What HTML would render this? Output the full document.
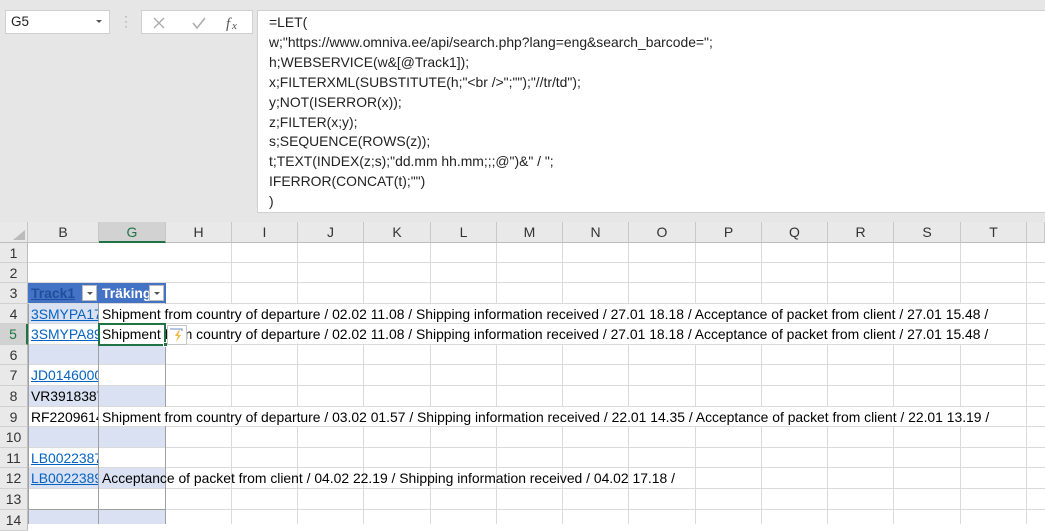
<!DOCTYPE html>
<html><head><meta charset="utf-8"><style>
*{margin:0;padding:0;box-sizing:border-box}
body{width:1045px;height:524px;overflow:hidden;background:#fff;font-family:"Liberation Sans",sans-serif;position:relative}
.a{position:absolute}
.fb{left:0;top:0;width:1045px;height:222px;background:#e6e6e6}
.ft{font-size:13.9px;color:#222;line-height:19.9px;white-space:pre}
.ch{top:222px;height:21px;background:#e9e9e9;border-right:1px solid #c8c8c8;border-bottom:1px solid #bdbdbd;font-size:14px;color:#333;text-align:center;line-height:20px}
.rh{left:0;width:28px;background:#e9e9e9;border-bottom:1px solid #d0d0d0;border-right:1px solid #bdbdbd;font-size:14px;color:#333;text-align:center;line-height:21px}
.hl{height:1px;background:#dadada;left:28px;width:1017px}
.vl{width:1px;background:#dadada;top:243px;height:281px}
.c{font-size:13.9px;line-height:21px;white-space:nowrap;overflow:hidden;padding-left:3px}
.lk{color:#0563c1;text-decoration:underline}
</style></head><body>
<div class="a fb"></div>
<div class="a" style="left:5px;top:10px;width:105px;height:24px;background:#fff;border:1px solid #d0d0d0;font-size:13.5px;line-height:22px;padding-left:5px;color:#222">G5</div>
<div class="a" style="left:96px;top:20px;width:0;height:0;border-left:3px solid transparent;border-right:3px solid transparent;border-top:3px solid #555"></div>
<div class="a" style="left:124px;top:14px;color:#999;font-size:12px;line-height:5px">·<br>·<br>·</div>
<div class="a" style="left:141px;top:10px;width:112px;height:24px;background:#fff;border:1px solid #d0d0d0"></div>
<svg class="a" style="left:150px;top:15px" width="100" height="16"><path d="M4 3l10 10M14 3L4 13" stroke="#aaa" stroke-width="1.3"/><path d="M43 8l4 5 8-10" stroke="#aaa" stroke-width="1.5" fill="none"/><text x="76" y="13" font-family="Liberation Serif" font-style="italic" font-size="15" fill="#555">f</text><text x="82" y="14" font-family="Liberation Serif" font-style="italic" font-size="11" fill="#555">x</text></svg>
<div class="a" style="left:257px;top:10px;width:788px;height:203px;background:#fff;border:1px solid #d0d0d0;border-right:none"></div>
<div class="a ft" style="left:269px;top:13px">=LET(
w;"https://www.omniva.ee/api/search.php?lang=eng&amp;search_barcode=";
h;WEBSERVICE(w&amp;[@Track1]);
x;FILTERXML(SUBSTITUTE(h;"&lt;br /&gt;";"");"//tr/td");
y;NOT(ISERROR(x));
z;FILTER(x;y);
s;SEQUENCE(ROWS(z));
t;TEXT(INDEX(z;s);"dd.mm hh.mm;;;@")&amp;" / ";
IFERROR(CONCAT(t);"")
)</div>
<div class="a ch" style="left:0;width:28px"></div>
<svg class="a" style="left:12px;top:229px" width="14" height="12"><path d="M13 1V11H1Z" fill="#bbb"/></svg>
<div class="a ch" style="left:28px;width:71px">B</div>
<div class="a ch" style="left:99px;width:67px;background:#d2d2d2;border-bottom:2px solid #217346;color:#217346">G</div>
<div class="a ch" style="left:166px;width:66px">H</div>
<div class="a ch" style="left:232px;width:66px">I</div>
<div class="a ch" style="left:298px;width:66px">J</div>
<div class="a ch" style="left:364px;width:67px">K</div>
<div class="a ch" style="left:431px;width:66px">L</div>
<div class="a ch" style="left:497px;width:66px">M</div>
<div class="a ch" style="left:563px;width:66px">N</div>
<div class="a ch" style="left:629px;width:67px">O</div>
<div class="a ch" style="left:696px;width:66px">P</div>
<div class="a ch" style="left:762px;width:66px">Q</div>
<div class="a ch" style="left:828px;width:66px">R</div>
<div class="a ch" style="left:894px;width:67px">S</div>
<div class="a ch" style="left:961px;width:66px">T</div>
<div class="a ch" style="left:1027px;width:18px"></div>
<div class="a vl" style="left:231px"></div><div class="a vl" style="left:297px"></div><div class="a vl" style="left:363px"></div><div class="a vl" style="left:430px"></div><div class="a vl" style="left:496px"></div><div class="a vl" style="left:562px"></div><div class="a vl" style="left:628px"></div><div class="a vl" style="left:695px"></div><div class="a vl" style="left:761px"></div><div class="a vl" style="left:827px"></div><div class="a vl" style="left:893px"></div><div class="a vl" style="left:960px"></div><div class="a vl" style="left:1026px"></div>
<div class="a hl" style="top:262px"></div><div class="a hl" style="top:282px"></div><div class="a hl" style="top:303px"></div><div class="a hl" style="top:323px"></div><div class="a hl" style="top:344px"></div><div class="a hl" style="top:364px"></div><div class="a hl" style="top:385px"></div><div class="a hl" style="top:406px"></div><div class="a hl" style="top:426px"></div><div class="a hl" style="top:447px"></div><div class="a hl" style="top:467px"></div><div class="a hl" style="top:488px"></div><div class="a hl" style="top:509px"></div>
<div class="a" style="left:28px;top:304px;width:138px;height:19px;background:#d9e1f2"></div>
<div class="a" style="left:28px;top:345px;width:138px;height:19px;background:#d9e1f2"></div>
<div class="a" style="left:28px;top:386px;width:138px;height:20px;background:#d9e1f2"></div>
<div class="a" style="left:28px;top:427px;width:138px;height:20px;background:#d9e1f2"></div>
<div class="a" style="left:28px;top:468px;width:138px;height:20px;background:#d9e1f2"></div>
<div class="a" style="left:28px;top:510px;width:138px;height:14px;background:#d9e1f2"></div>
<div class="a" style="left:28px;top:304px;width:1px;height:220px;background:#a0a0a0"></div>
<div class="a" style="left:98px;top:283px;width:1px;height:241px;background:#a0a0a0"></div>
<div class="a" style="left:165px;top:283px;width:1px;height:241px;background:#a0a0a0"></div>
<div class="a" style="left:28px;top:509px;width:138px;height:1px;background:#a0a0a0"></div>
<div class="a" style="left:28px;top:283px;width:138px;height:20px;background:#4472c4"></div>
<div class="a c" style="left:28px;top:283px;width:70px;color:#1f4e9c;font-weight:bold;text-decoration:underline">Track1</div>
<div class="a c" style="left:99px;top:283px;width:50px;color:#fff;font-weight:bold">Träking</div>
<div class="a" style="left:82px;top:285px;width:15px;height:16px;background:#fff;border:1px solid #bbb"></div>
<div class="a" style="left:149px;top:285px;width:15px;height:16px;background:#fff;border:1px solid #bbb"></div>
<svg class="a" style="left:82px;top:285px" width="90" height="16"><path d="M5 7h6l-3 3z" fill="#555"/><path d="M72 7h6l-3 3z" fill="#555"/></svg>
<div class="a c lk" style="left:28px;top:304px;width:70px">3SMYPA1777</div>
<div class="a c" style="left:99px;top:304px;width:895px;background:#fff;height:19px">Shipment from country of departure / 02.02 11.08 / Shipping information received / 27.01 18.18 / Acceptance of packet from client / 27.01 15.48 /</div>
<div class="a c lk" style="left:28px;top:324px;width:70px">3SMYPA8989</div>
<div class="a c" style="left:99px;top:324px;width:895px;background:#fff;height:20px">Shipment from country of departure / 02.02 11.08 / Shipping information received / 27.01 18.18 / Acceptance of packet from client / 27.01 15.48 /</div>
<div class="a" style="left:98px;top:323px;width:68px;height:23px;border:2px solid #217346"></div>
<div class="a" style="left:163px;top:342px;width:5px;height:5px;background:#217346;border:1px solid #fff"></div>
<div class="a" style="left:167px;top:325px;width:20px;height:20px;background:#fff;border:1px solid #c6c6c6"></div>
<svg class="a" style="left:169px;top:327px" width="16" height="16"><path d="M1 2h12v2" stroke="#6d8fc7" fill="none"/><path d="M10 3L6 9h3l-2 6 5-7H9l2-5z" fill="#f4b942"/></svg>
<div class="a c lk" style="left:28px;top:365px;width:70px">JD014600003</div>
<div class="a c" style="left:28px;top:386px;width:70px">VR3918387</div>
<div class="a c" style="left:28px;top:407px;width:70px">RF2209614</div>
<div class="a c" style="left:99px;top:407px;width:895px;background:#fff;height:19px">Shipment from country of departure / 03.02 01.57 / Shipping information received / 22.01 14.35 / Acceptance of packet from client / 22.01 13.19 /</div>
<div class="a c lk" style="left:28px;top:448px;width:70px">LB0022387</div>
<div class="a c lk" style="left:28px;top:468px;width:70px">LB0022389</div>
<div class="a c" style="left:99px;top:468px;width:600px;height:20px">Acceptance of packet from client / 04.02 22.19 / Shipping information received / 04.02 17.18 /</div>
<div class="a rh" style="top:243px;height:20px">1</div>
<div class="a rh" style="top:263px;height:20px">2</div>
<div class="a rh" style="top:283px;height:21px">3</div>
<div class="a rh" style="top:304px;height:20px">4</div>
<div class="a rh" style="top:324px;height:21px;background:#d2d2d2;color:#217346;border-right:2px solid #217346">5</div>
<div class="a rh" style="top:345px;height:20px">6</div>
<div class="a rh" style="top:365px;height:21px">7</div>
<div class="a rh" style="top:386px;height:21px">8</div>
<div class="a rh" style="top:407px;height:20px">9</div>
<div class="a rh" style="top:427px;height:21px">10</div>
<div class="a rh" style="top:448px;height:20px">11</div>
<div class="a rh" style="top:468px;height:21px">12</div>
<div class="a rh" style="top:489px;height:21px">13</div>
<div class="a rh" style="top:510px;height:21px">14</div>
</body></html>
